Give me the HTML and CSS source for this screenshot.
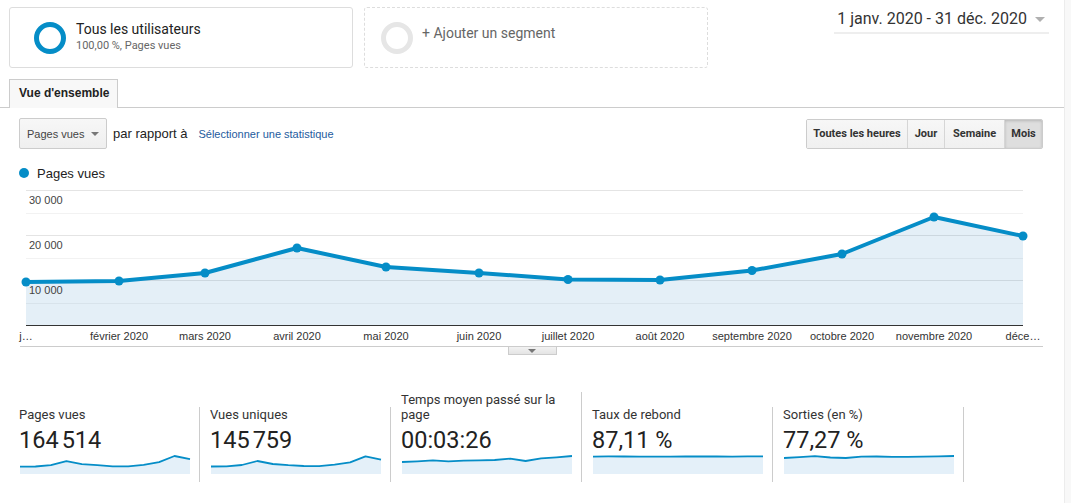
FILE: index.html
```html
<!DOCTYPE html>
<html lang="fr">
<head>
<meta charset="utf-8">
<title>Vue d'ensemble</title>
<link rel="stylesheet" href="styles.css">
</head>
<body>
<div class="shell">
  <div class="page">
    <div class="top">
      <div class="segment">
        <span class="ring ring-active"></span>
        <div class="segment-text">
          <div class="segment-title">Tous les utilisateurs</div>
          <div class="segment-sub">100,00 %, Pages vues</div>
        </div>
      </div>
      <div class="segment segment-add">
        <span class="ring ring-empty"></span>
        <div class="segment-text add-text">+ Ajouter un segment</div>
      </div>
      <div class="date-range">
        <span class="date-text">1 janv. 2020 - 31 déc. 2020</span>
        <span class="date-caret"></span>
      </div>
    </div>

    <div class="tabs">
      <div class="tab">Vue d'ensemble</div>
    </div>

    <div class="controls">
      <div class="metric-select">
        <span>Pages vues</span>
        <span class="select-caret"></span>
      </div>
      <span class="versus">par rapport à</span>
      <a class="pick-metric">Sélectionner une statistique</a>
      <div class="btn-group">
        <span class="btn btn-hours">Toutes les heures</span>
        <span class="btn btn-day">Jour</span>
        <span class="btn btn-week">Semaine</span>
        <span class="btn btn-month active">Mois</span>
      </div>
    </div>

    <div class="legend">
      <span class="legend-dot"></span>
      <span class="legend-label">Pages vues</span>
    </div>

    <svg class="chart" width="1064" height="161" viewBox="0 185 1064 161">
      <line class="grid-major" x1="26" x2="1023" y1="190.5" y2="190.5"/>
      <line class="grid-minor" x1="26" x2="1023" y1="213.5" y2="213.5"/>
      <line class="grid-major" x1="26" x2="1023" y1="235.5" y2="235.5"/>
      <line class="grid-minor" x1="26" x2="1023" y1="258.5" y2="258.5"/>
      <line class="grid-major" x1="26" x2="1023" y1="280.5" y2="280.5"/>
      <line class="grid-minor" x1="26" x2="1023" y1="303.5" y2="303.5"/>
      <path class="chart-area" d="M26,282 L119,281 L205,273 L297,248 L386,267 L479,273 L568,279.5 L660,280 L752,270.5 L842,254 L934,217 L1023,236 L1023,325 L26,325 Z"/>
      <line class="axis" x1="26" x2="1023" y1="325.5" y2="325.5"/>
      <polyline class="chart-line" points="26,282 119,281 205,273 297,248 386,267 479,273 568,279.5 660,280 752,270.5 842,254 934,217 1023,236"/>
      <g class="chart-dots">
        <circle cx="26" cy="282" r="4.5"/>
        <circle cx="119" cy="281" r="4.5"/>
        <circle cx="205" cy="273" r="4.5"/>
        <circle cx="297" cy="248" r="4.5"/>
        <circle cx="386" cy="267" r="4.5"/>
        <circle cx="479" cy="273" r="4.5"/>
        <circle cx="568" cy="279.5" r="4.5"/>
        <circle cx="660" cy="280" r="4.5"/>
        <circle cx="752" cy="270.5" r="4.5"/>
        <circle cx="842" cy="254" r="4.5"/>
        <circle cx="934" cy="217" r="4.5"/>
        <circle cx="1023" cy="236" r="4.5"/>
      </g>
      <g class="y-labels">
        <text x="29" y="204">30 000</text>
        <text x="29" y="249">20 000</text>
        <text x="29" y="294">10 000</text>
      </g>
      <g class="x-labels">
        <text x="26" y="340">j…</text>
        <text x="119" y="340">février 2020</text>
        <text x="205" y="340">mars 2020</text>
        <text x="297" y="340">avril 2020</text>
        <text x="386" y="340">mai 2020</text>
        <text x="479" y="340">juin 2020</text>
        <text x="568" y="340">juillet 2020</text>
        <text x="660" y="340">août 2020</text>
        <text x="752" y="340">septembre 2020</text>
        <text x="842" y="340">octobre 2020</text>
        <text x="934" y="340">novembre 2020</text>
        <text x="1023" y="340">déce…</text>
      </g>
    </svg>
    <div class="chart-foot">
      <div class="collapse-tab"><span class="collapse-caret"></span></div>
    </div>

    <div class="cards">
      <div class="card">
        <div class="card-label">Pages vues</div>
        <div class="card-value">164<span class="digit-gap"></span>514</div>
        <svg class="spark" width="170" height="21" viewBox="0 0 170 21">
          <path class="spark-fill" d="M0,13.7 L15.5,13.5 L30.9,12.2 L46.4,8.1 L61.8,11.2 L77.3,12.2 L92.7,13.3 L108.2,13.4 L123.6,11.8 L139.1,9.1 L154.5,3 L170,6.1 L170,21 L0,21 Z"/>
          <polyline class="spark-line" points="0,13.7 15.5,13.5 30.9,12.2 46.4,8.1 61.8,11.2 77.3,12.2 92.7,13.3 108.2,13.4 123.6,11.8 139.1,9.1 154.5,3 170,6.1"/>
        </svg>
      </div>
      <div class="card">
        <div class="card-label">Vues uniques</div>
        <div class="card-value">145<span class="digit-gap"></span>759</div>
        <svg class="spark" width="170" height="21" viewBox="0 0 170 21">
          <path class="spark-fill" d="M0,13.5 L15.5,13.3 L30.9,12 L46.4,8 L61.8,11 L77.3,12.2 L92.7,13 L108.2,13.2 L123.6,11.7 L139.1,9.4 L154.5,3.4 L170,6.6 L170,21 L0,21 Z"/>
          <polyline class="spark-line" points="0,13.5 15.5,13.3 30.9,12 46.4,8 61.8,11 77.3,12.2 92.7,13 108.2,13.2 123.6,11.7 139.1,9.4 154.5,3.4 170,6.6"/>
        </svg>
      </div>
      <div class="card">
        <div class="card-label">Temps moyen passé sur la page</div>
        <div class="card-value">00:03:26</div>
        <svg class="spark" width="170" height="21" viewBox="0 0 170 21">
          <path class="spark-fill" d="M0,9 L15.5,8.3 L30.9,7.3 L46.4,8.3 L61.8,7.7 L77.3,7.3 L92.7,7 L108.2,5.7 L123.6,8 L139.1,5.3 L154.5,4.3 L170,3 L170,21 L0,21 Z"/>
          <polyline class="spark-line" points="0,9 15.5,8.3 30.9,7.3 46.4,8.3 61.8,7.7 77.3,7.3 92.7,7 108.2,5.7 123.6,8 139.1,5.3 154.5,4.3 170,3"/>
        </svg>
      </div>
      <div class="card">
        <div class="card-label">Taux de rebond</div>
        <div class="card-value">87,11 %</div>
        <svg class="spark" width="170" height="21" viewBox="0 0 170 21">
          <path class="spark-fill" d="M0,3.6 L15.5,3.4 L30.9,3.5 L46.4,3.6 L61.8,3.7 L77.3,3.6 L92.7,3.5 L108.2,3.3 L123.6,3.5 L139.1,3.6 L154.5,3.4 L170,3.3 L170,21 L0,21 Z"/>
          <polyline class="spark-line" points="0,3.6 15.5,3.4 30.9,3.5 46.4,3.6 61.8,3.7 77.3,3.6 92.7,3.5 108.2,3.3 123.6,3.5 139.1,3.6 154.5,3.4 170,3.3"/>
        </svg>
      </div>
      <div class="card">
        <div class="card-label">Sorties (en %)</div>
        <div class="card-value">77,27 %</div>
        <svg class="spark" width="170" height="21" viewBox="0 0 170 21">
          <path class="spark-fill" d="M0,5 L15.5,4.2 L30.9,3.2 L46.4,4.5 L61.8,5 L77.3,3.6 L92.7,3.5 L108.2,3.8 L123.6,3.9 L139.1,3.7 L154.5,3.4 L170,3 L170,21 L0,21 Z"/>
          <polyline class="spark-line" points="0,5 15.5,4.2 30.9,3.2 46.4,4.5 61.8,5 77.3,3.6 92.7,3.5 108.2,3.8 123.6,3.9 139.1,3.7 154.5,3.4 170,3"/>
        </svg>
      </div>
    </div>
  </div>
  <div class="scroll-strip"></div>
</div>
</body>
</html>
```

FILE: styles.css
```css
* { box-sizing: border-box; }

html, body {
  margin: 0;
  padding: 0;
  background: #fff;
}

body {
  font-family: Roboto, "Liberation Sans", Arial, sans-serif;
  color: #222;
}

.shell {
  display: flex;
  min-height: 503px;
  overflow: hidden;
}

.page {
  width: 1064px;
  flex: none;
}

.scroll-strip {
  flex: 1;
  background: #f8f8f8;
  border-left: 1px solid #ececec;
}

/* ---------- segments row ---------- */
.top {
  display: flex;
  align-items: flex-start;
  padding: 7px 15px 0 9px;
}

.segment {
  width: 344px;
  height: 61px;
  border: 1px solid #ddd;
  border-radius: 3px;
  display: flex;
  align-items: center;
  padding-left: 24px;
  gap: 10px;
}

.segment-add {
  margin-left: 11px;
  border: 1px dashed #ddd;
  padding-left: 16px;
  gap: 9px;
}

.ring {
  width: 32px;
  height: 32px;
  border-radius: 50%;
  flex: none;
}

.ring-active { border: 5px solid #058dc7; }
.ring-empty { border: 5px solid #e6e6e6; }

.segment-text { padding-bottom: 2px; }

.segment-title {
  font-size: 14px;
  line-height: 17px;
  color: #222;
}

.segment-sub {
  font-size: 11px;
  line-height: 14px;
  margin-top: 1px;
  color: #666;
}

.add-text {
  font-size: 14px;
  line-height: 17px;
  color: #666;
  padding-bottom: 8px;
}

.date-range {
  margin-left: auto;
  margin-top: 2px;
  display: flex;
  align-items: center;
  gap: 8px;
  padding: 0 4px 3px 3px;
  border-bottom: 2px solid #eee;
}

.date-text {
  font-size: 16px;
  line-height: 20px;
  color: #333;
}

.date-caret {
  width: 0;
  height: 0;
  border-left: 5px solid transparent;
  border-right: 5px solid transparent;
  border-top: 5px solid #b0b0b0;
}

/* ---------- tabs ---------- */
.tabs {
  margin-top: 11px;
  height: 29px;
  border-bottom: 1px solid #ccc;
  padding-left: 9px;
  display: flex;
}

.tab {
  height: 29px;
  margin-bottom: -1px;
  padding: 0 8px 0 9px;
  border: 1px solid #ccc;
  border-bottom: none;
  background: #f8f8f8;
  font-family: "Liberation Sans", Arial, sans-serif;
  font-weight: bold;
  font-size: 12px;
  line-height: 27px;
  color: #222;
}

/* ---------- controls ---------- */
.controls {
  display: flex;
  align-items: center;
  padding: 10px 21px 0 19px;
}

.metric-select {
  width: 88px;
  height: 31px;
  border: 1px solid #ccc;
  border-radius: 2px;
  background: linear-gradient(#f7f7f7, #efefef);
  display: flex;
  align-items: center;
  justify-content: space-between;
  padding: 0 7px 0 7px;
  font-family: "Liberation Sans", Arial, sans-serif;
  font-size: 11px;
  color: #444;
}

.select-caret {
  width: 0;
  height: 0;
  border-left: 4px solid transparent;
  border-right: 4px solid transparent;
  border-top: 4px solid #777;
}

.versus {
  margin-left: 6px;
  font-family: "Liberation Sans", Arial, sans-serif;
  font-size: 13px;
  color: #222;
}

.pick-metric {
  margin-left: 11px;
  font-family: "Liberation Sans", Arial, sans-serif;
  font-size: 11px;
  color: #245b9e;
  text-decoration: none;
}

.btn-group {
  margin-left: auto;
  display: flex;
  height: 30px;
  border: 1px solid #ccc;
  border-radius: 2px;
  overflow: hidden;
}

.btn {
  display: flex;
  align-items: center;
  justify-content: center;
  height: 28px;
  border-left: 1px solid #d6d6d6;
  background: linear-gradient(#f7f7f7, #f0f0f0);
  font-family: Roboto, "Liberation Sans", Arial, sans-serif;
  font-weight: bold;
  font-size: 11px;
  color: #333;
}

.btn-hours { width: 100px; border-left: none; }
.btn-day { width: 37px; }
.btn-week { width: 60px; }
.btn-month { width: 38px; }

.btn.active {
  background: #dedede;
  box-shadow: inset 0 1px 3px rgba(0, 0, 0, 0.18);
}

/* ---------- legend ---------- */
.legend {
  margin-top: 14px;
  height: 20px;
  display: flex;
  align-items: center;
  padding-left: 19px;
}

.legend-dot {
  width: 10px;
  height: 10px;
  border-radius: 50%;
  background: #058dc7;
}

.legend-label {
  margin-left: 8px;
  font-family: "Liberation Sans", Arial, sans-serif;
  font-size: 13px;
  color: #222;
}

/* ---------- chart ---------- */
.chart {
  display: block;
  margin-top: 2px;
}

.grid-major { stroke: #e4e4e4; stroke-width: 1; }
.grid-minor { stroke: #f2f2f2; stroke-width: 1; }

.chart-area {
  fill: #0a6fb8;
  fill-opacity: 0.11;
}

.axis { stroke: #333; stroke-width: 1; }

.chart-line {
  fill: none;
  stroke: #058dc7;
  stroke-width: 4;
  stroke-linejoin: round;
}

.chart-dots circle { fill: #058dc7; }

.y-labels text {
  font-family: "Liberation Sans", Arial, sans-serif;
  font-size: 11px;
  fill: #444;
}

.x-labels text {
  font-family: "Liberation Sans", Arial, sans-serif;
  font-size: 11px;
  fill: #333;
  text-anchor: middle;
}

.chart-foot {
  margin: 0 21px 0 20px;
  border-top: 1px solid #ccc;
  display: flex;
  justify-content: center;
}

.collapse-tab {
  width: 49px;
  height: 8px;
  border: 1px solid #ccc;
  border-top: none;
  background: linear-gradient(#f2f2f2, #e4e4e4);
  display: flex;
  justify-content: center;
  align-items: center;
  margin-left: 1px;
}

.collapse-caret {
  width: 0;
  height: 0;
  border-left: 4px solid transparent;
  border-right: 4px solid transparent;
  border-top: 4px solid #777;
}

/* ---------- scorecards ---------- */
.cards {
  display: flex;
  align-items: flex-end;
  margin-top: 37px;
  padding-left: 9px;
}

.card {
  width: 191px;
  padding: 0 10px 8px 10px;
  border-right: 1px solid #ccc;
}

.card-label {
  font-size: 13px;
  line-height: 15px;
  color: #333;
}

.card-value {
  margin-top: 6px;
  font-size: 23.5px;
  line-height: 25px;
  color: #222;
}

.digit-gap {
  display: inline-block;
  width: 3px;
}

.spark {
  display: block;
  margin-left: 1px;
  overflow: visible;
}

.spark-fill { fill: #e4f0f9; }

.spark-line {
  fill: none;
  stroke: #058dc7;
  stroke-width: 1.8;
  stroke-linejoin: round;
}
```
